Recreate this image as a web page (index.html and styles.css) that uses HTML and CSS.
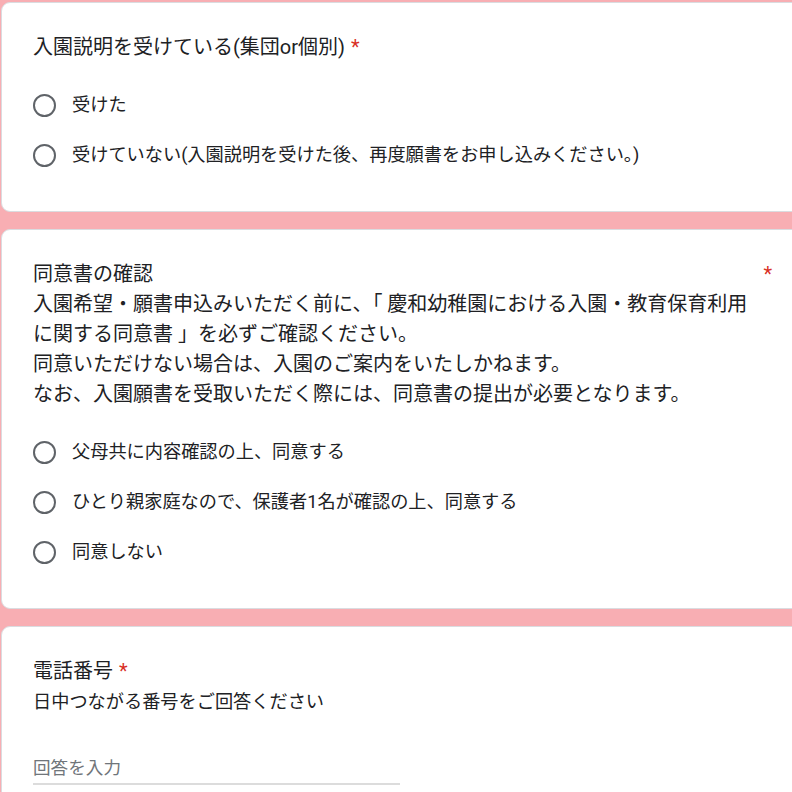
FILE: index.html
```html
<!DOCTYPE html>
<html lang="ja">
<head>
<meta charset="utf-8">
<title>入園申込フォーム</title>
<link rel="stylesheet" href="styles.css">
</head>
<body>
<div class="form">
  <div class="card">
    <div class="q-head">
      <div class="q-title">入園説明を受けている(集団or個別)</div>
      <span class="req">*</span>
    </div>
    <div class="options">
      <label class="opt"><span class="radio"></span><span class="opt-text">受けた</span></label>
      <label class="opt"><span class="radio"></span><span class="opt-text">受けていない(入園説明を受けた後、再度願書をお申し込みください。)</span></label>
    </div>
  </div>

  <div class="card">
    <div class="q-head">
      <div class="q-title">同意書の確認<br>入園希望・願書申込みいただく前に、「 慶和幼稚園における入園・教育保育利用に関する同意書 」を必ずご確認ください。<br>同意いただけない場合は、入園のご案内をいたしかねます。<br>なお、入園願書を受取いただく際には、同意書の提出が必要となります。</div>
      <span class="req">*</span>
    </div>
    <div class="options">
      <label class="opt"><span class="radio"></span><span class="opt-text">父母共に内容確認の上、同意する</span></label>
      <label class="opt"><span class="radio"></span><span class="opt-text">ひとり親家庭なので、保護者1名が確認の上、同意する</span></label>
      <label class="opt"><span class="radio"></span><span class="opt-text">同意しない</span></label>
    </div>
  </div>

  <div class="card">
    <div class="q-head">
      <div class="q-title">電話番号</div>
      <span class="req">*</span>
    </div>
    <div class="q-desc">日中つながる番号をご回答ください</div>
    <div class="input"><span class="placeholder">回答を入力</span></div>
  </div>
</div>
</body>
</html>
```

FILE: styles.css
```css
html, body {
  margin: 0;
  padding: 0;
}
body {
  background: #f8aeb3;
  font-family: Roboto, "Noto Sans CJK JP", sans-serif;
  color: #202124;
  overflow: hidden;
  height: 792px;
}
.form {
  padding: 2px 0 0 1px;
}
.card {
  box-sizing: border-box;
  width: 830px;
  background: #ffffff;
  border: 1px solid #dadce0;
  border-radius: 9px;
  padding: 29px 58px 31px 31px;
  margin-bottom: 17px;
}
.q-head {
  display: flex;
  align-items: flex-start;
}
.q-title {
  font-size: 20px;
  line-height: 30px;
  flex: 0 1 auto;
}
.req {
  color: #d93025;
  font-size: 20px;
  line-height: 30px;
  margin-left: 6px;
  flex: 0 0 auto;
}
.options {
  margin-top: 18px;
  display: flex;
  flex-direction: column;
}
.opt {
  display: flex;
  align-items: center;
  height: 50px;
}
.radio {
  box-sizing: border-box;
  width: 23px;
  height: 23px;
  border: 2px solid #5f6368;
  border-radius: 50%;
  flex: 0 0 auto;
}
.opt-text {
  font-size: 18.2px;
  line-height: 24px;
  margin-left: 16px;
}
.q-desc {
  font-size: 18.2px;
  line-height: 28px;
  margin-top: 2px;
}
.input {
  width: 367px;
  margin-top: 40px;
  padding-bottom: 3px;
  border-bottom: 2px solid #dcdcdc;
}
.placeholder {
  font-size: 17.6px;
  line-height: 24px;
  color: #70757a;
  display: block;
}
```
